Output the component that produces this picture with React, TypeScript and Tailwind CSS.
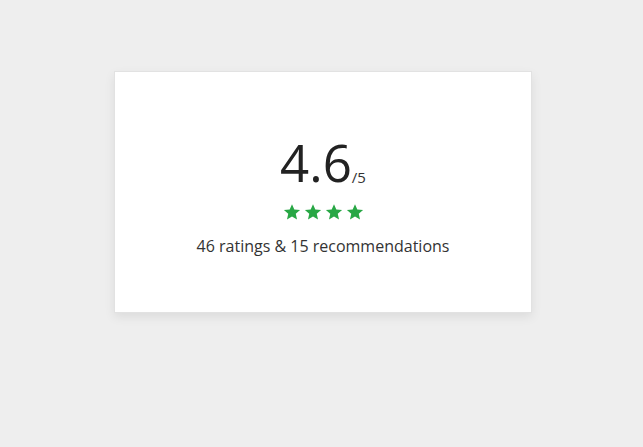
import React from "react";

function Star() {
  return (
    <svg width="18" height="18" viewBox="0 0 24 24" className="block">
      <path
        d="M12 1.5l3.1 7.1 7.7.7-5.8 5.1 1.7 7.6L12 18l-6.7 4 1.7-7.6-5.8-5.1 7.7-.7z"
        fill="#28a745"
      />
    </svg>
  );
}

export default function App() {
  return (
    <div
      className="w-[643px] h-[447px] bg-[#eeeeee] pt-[71px] pl-[114px]"
      style={{ fontFamily: '"Open Sans", sans-serif' }}
    >
      <div className="w-[418px] h-[242px] bg-white border border-[#e2e2e2] shadow-[0_4px_10px_rgba(0,0,0,0.08)] flex flex-col items-center pt-[65px]">
        <div className="flex items-end text-[#222] leading-none">
          <span className="text-[51px] leading-none">4.6</span>
          <span className="text-[15px] leading-none mb-[3px] text-[#333]">/5</span>
        </div>
        <div className="flex gap-[3px] mt-[15px]">
          <Star />
          <Star />
          <Star />
          <Star />
        </div>
        <div className="mt-[13px] text-[16px] text-[#333]">46 ratings &amp; 15 recommendations</div>
      </div>
    </div>
  );
}
